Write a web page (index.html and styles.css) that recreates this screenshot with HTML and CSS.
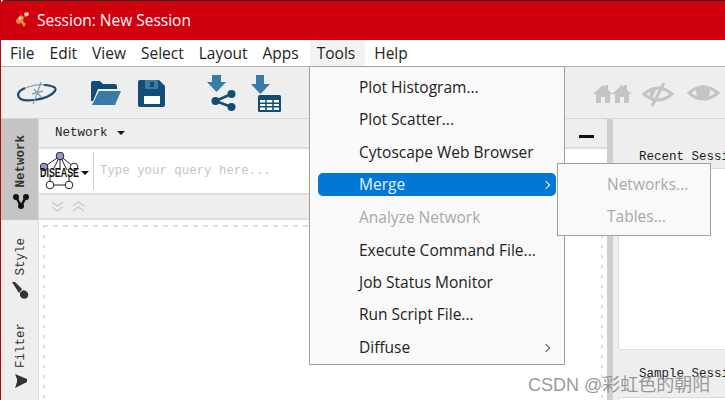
FILE: index.html
```html
<!DOCTYPE html>
<html lang="en">
<head>
  <meta charset="UTF-8" />
  <title>Session: New Session</title>
  <link rel="stylesheet" href="styles.css">
</head>
<body>
  <div class="window">
    <div class="titlebar">
      <svg class="app-icon" width="16" height="16" viewBox="0 0 16 16">
        <path d="M1 8 L6 3 L9 5 L8 9 L11 12 L9 15 L6 11 L3 12 L1 10 Z" fill="#e8873a"/>
        <path d="M9 1 L13 0 L14 3 L10 5 Z" fill="#f0d8b8"/>
        <circle cx="5" cy="6" r="1.500" fill="#f4e4cc"/>
      </svg>
      <span>Session: New Session</span>
    </div>

    <div class="menubar">
      <span class="menu-item">File</span>
      <span class="menu-item">Edit</span>
      <span class="menu-item">View</span>
      <span class="menu-item">Select</span>
      <span class="menu-item">Layout</span>
      <span class="menu-item">Apps</span>
      <span class="menu-item active">Tools</span>
      <span class="menu-item">Help</span>
    </div>

    <div class="toolbar">
      <svg class="tool logo" width="42" height="26" viewBox="0 0 42 26">
        <path d="M3 16 Q1 11 12 7 Q24 3 36 6" fill="none" stroke="#8aa0b0" stroke-width="1.200"/>
        <path d="M28 5 Q42 6 39 11 Q34 18 18 20 Q3 22 2 15 Q2 11 9 8" fill="none" stroke="#1f4e70" stroke-width="2.200"/>
        <path d="M17 24 L21 14 L25 2 M18 9 L25 17 M16 14 L27 11" fill="none" stroke="#8aa0b0" stroke-width="1.300"/>
      </svg>
      <svg class="tool open" width="32" height="26" viewBox="0 0 32 26">
        <path d="M1 3 Q1 1 3 1 H10 L13 4 H25 Q27 4 27 6 V9 H8 L3 21 H1 Z" fill="#134d75"/>
        <path d="M9 11 H31 L25 25 H2 Z" fill="#3a7ba6"/>
      </svg>
      <svg class="tool save" width="29" height="29" viewBox="0 0 29 29">
        <path d="M1 3 Q1 1 3 1 H22 L28 7 V26 Q28 28 26 28 H3 Q1 28 1 26 Z" fill="#134d75"/>
        <rect x="8" y="1" width="13" height="9" fill="#3a7ba6"/>
        <rect x="13" y="3" width="4" height="5" fill="#134d75"/>
        <rect x="7" y="17" width="16" height="8" fill="#fff"/>
      </svg>
      <svg class="tool import-net" width="30" height="39" viewBox="0 0 30 39">
        <path d="M5 1 H14 V8 H19 L9.500 18 L0 8 H5 Z" fill="#3a7ba6"/>
        <path d="M24.500 20 L8.500 27 L24.500 33" fill="none" stroke="#134d75" stroke-width="2.500"/>
        <circle cx="24.500" cy="20" r="4" fill="#134d75"/>
        <circle cx="8.500" cy="27" r="4" fill="#134d75"/>
        <circle cx="24.500" cy="33" r="4" fill="#134d75"/>
      </svg>
      <svg class="tool import-table" width="30" height="38" viewBox="0 0 30 38">
        <path d="M5 0 H13 V9 H19 L9.500 19 L0 9 H5 Z" fill="#3a7ba6"/>
        <rect x="7" y="20" width="23" height="17" rx="1.500" fill="#134d75"/>
        <path d="M9 25 H28 V35 H9 Z" fill="#fff"/>
        <path d="M9 28.300 H28 M9 31.700 H28 M15 25 V35 M22 25 V35" stroke="#134d75" stroke-width="1.500"/>
      </svg>
    </div>

    <div class="main">
      <div class="side-tabs">
        <div class="side-tab selected">
          <span class="tab-label bold">Network</span>
          <svg width="16" height="16" viewBox="0 0 16 16">
            <path d="M3 3 L8 12 L13 3" fill="none" stroke="#111" stroke-width="2.500"/>
            <circle cx="3" cy="3" r="3" fill="#111"/>
            <circle cx="13" cy="3" r="3" fill="#111"/>
            <circle cx="8" cy="12" r="3" fill="#111"/>
          </svg>
        </div>
        <div class="side-tab style-tab">
          <span class="tab-label">Style</span>
          <svg width="18" height="17" viewBox="0 0 18 17">
            <path d="M0 0 L3 0 L10 7 L7 11 Z" fill="#333"/>
            <path d="M8 11 Q10 7 14 9 Q18 12 15 16 Q10 18 8 14 Z" fill="#333"/>
          </svg>
        </div>
        <div class="side-tab filter-tab">
          <span class="tab-label">Filter</span>
          <svg width="16" height="16" viewBox="0 0 16 16">
            <path d="M2 0 L14 5 L14 8 L2 14 L4 8 L4 5 Z" fill="#333"/>
          </svg>
        </div>
      </div>

      <div class="network-panel">
        <div class="panel-head">
          <span class="panel-title">Network</span>
          <span class="caret"></span>
          <span class="minimize"></span>
        </div>
        <div class="search-row">
          <div class="query-icon">
            <svg width="40" height="38" viewBox="0 0 40 38">
              <path d="M4 15 L20 4 L34 15 M20 4 V18 M13 18 L20 4 L27 18 M10 33 H29 M10 24 V33 M29 24 V33" fill="none" stroke="#222" stroke-width="1"/>
              <circle cx="20" cy="4" r="3.800" fill="#8f9bd0" stroke="#222"/>
              <circle cx="4" cy="15" r="3.800" fill="#8f9bd0" stroke="#222"/>
              <circle cx="34" cy="15" r="3.800" fill="#fff" stroke="#222"/>
              <circle cx="10" cy="33" r="3.800" fill="#fff" stroke="#222"/>
              <circle cx="29" cy="33" r="3.800" fill="#fff" stroke="#222"/>
            </svg>
            <span class="disease">DISEASE</span>
            <span class="caret"></span>
          </div>
          <span class="query-text">Type your query here...</span>
        </div>
        <div class="arrows-row">
          <svg width="34" height="14" viewBox="0 0 34 14">
            <path d="M1 2 L6.500 6 L12 2 M1 7 L6.500 11 L12 7 M22 6 L27.500 2 L33 6 M22 11 L27.500 7 L33 11" fill="none" stroke="#cccccc" stroke-width="1.500"/>
          </svg>
        </div>
        <div class="canvas-area">
          <div class="dashed"></div>
        </div>
      </div>

      <div class="splitter"></div>

      <div class="right-panel">
        <div class="session-head">Recent Sessions</div>
        <div class="session-box recent"></div>
        <div class="session-head sample">Sample Sessions</div>
        <div class="session-box"></div>
      </div>
    </div>

    <svg class="view-icons" width="130" height="27" viewBox="0 0 130 27">
      <g fill="#c4c4c4">
        <path d="M1 14 L11 5 L13 7 V5 H16 V10 L21 14 H18 V23 H13 V17 H9 V23 H4 V14 Z"/>
        <path d="M20 14 L30 5 L32 7 V5 H35 V10 L40 14 H37 V23 H32 V17 H28 V23 H23 V14 Z"/>
      </g>
      <g fill="none" stroke="#c4c4c4" stroke-width="3">
        <path d="M52 14 Q66 2 80 14 Q66 26 52 14 Z"/>
        <path d="M72 3 L60 26"/>
        <path d="M97 13 Q111 1 126 13 Q111 25 97 13 Z"/>
      </g>
      <circle cx="111" cy="12" r="7" fill="#c4c4c4"/>
      <path d="M65 7 A7 7 0 0 0 60 19 Z" fill="#c4c4c4"/>
    </svg>

    <div class="dropdown">
      <div class="drop-item">Plot Histogram...</div>
      <div class="drop-item">Plot Scatter...</div>
      <div class="drop-item">Cytoscape Web Browser</div>
      <div class="drop-item hilite">Merge<span class="chev"></span></div>
      <div class="drop-item off">Analyze Network</div>
      <div class="drop-item">Execute Command File...</div>
      <div class="drop-item">Job Status Monitor</div>
      <div class="drop-item">Run Script File...</div>
      <div class="drop-item">Diffuse<span class="chev"></span></div>
    </div>

    <div class="submenu">
      <div class="drop-item off">Networks...</div>
      <div class="drop-item off">Tables...</div>
    </div>

    <div class="watermark">CSDN @彩虹色的朝阳</div>
  </div>
</body>
</html>
```

FILE: styles.css
```css
* {
  box-sizing: border-box;
}

html, body {
  margin: 0;
  height: 100%;
  overflow: hidden;
  background: #fff;
}

.window {
  position: relative;
  width: 725px;
  height: 400px;
  display: flex;
  flex-direction: column;
  overflow: hidden;
  border-left: 1px solid #c00010;
  font-family: "Open Sans", "Noto Sans", sans-serif;
  color: #222;
}

.titlebar {
  height: 40px;
  flex: none;
  background: #d0000f;
  color: #fff;
  font-size: 15.500px;
  display: flex;
  align-items: center;
  gap: 6px;
  padding-left: 14px;
  padding-bottom: 2px;
  border-top: 1px solid #2a2a2a;
  border-radius: 4px 0 0 0;
}

.menubar {
  height: 27px;
  flex: none;
  display: flex;
  align-items: center;
  padding-left: 4px;
  background: #fff;
  border-bottom: 1px solid #b4b4b4;
  font-size: 15.500px;
}

.menu-item {
  padding: 2px 5px;
  margin-right: 5px;
  height: 26px;
  line-height: 23px;
}

.menu-item.active {
  background: #f2f2f2;
  border-radius: 3px 3px 0 0;
  margin-left: 1px;
  margin-right: 4px;
  padding: 2px 10px 2px 7px;
}

.toolbar {
  height: 52px;
  flex: none;
  background: #eeeeee;
  border-bottom: 1px solid #d6d6d6;
  display: flex;
  align-items: center;
  padding-left: 15px;
}

.tool {
  flex: none;
}

.open { margin-left: 32px; }
.save { margin-left: 15px; margin-top: 1px; }
.import-net { margin-left: 41px; margin-top: 2px; }
.import-table { margin-left: 14px; margin-top: 3px; }

.view-icons {
  position: absolute;
  left: 591px;
  top: 80px;
}

.main {
  flex: 1;
  display: flex;
  min-height: 0;
}

.side-tabs {
  width: 37px;
  flex: none;
  background: #eeeeee;
  display: flex;
  flex-direction: column;
}

.side-tab {
  display: flex;
  flex-direction: column;
  align-items: center;
  justify-content: flex-end;
  gap: 6px;
  padding-bottom: 4px;
  padding-left: 2px;
}

.side-tab.selected {
  height: 101px;
  background: #c4c4c4;
  padding-bottom: 10px;
  margin-bottom: 2px;
}

.side-tab.style-tab {
  height: 81px;
}

.side-tab.filter-tab {
  height: 91px;
}

.tab-label {
  writing-mode: vertical-rl;
  transform: rotate(180deg);
  font-family: "Liberation Mono", monospace;
  font-size: 12.500px;
  color: #333;
}

.tab-label.bold {
  font-weight: bold;
}

.network-panel {
  width: 569px;
  flex: none;
  display: flex;
  flex-direction: column;
  border-left: 1px solid #dddddd;
}

.panel-head {
  height: 30px;
  flex: none;
  background: #eeeeee;
  border-bottom: 2px solid #dedede;
  display: flex;
  align-items: center;
  padding-left: 16px;
  padding-bottom: 1px;
  font-family: "Liberation Mono", monospace;
  font-size: 12.500px;
  color: #222;
}

.panel-title {
  margin-right: 9px;
}

.caret {
  display: inline-block;
  width: 0;
  height: 0;
  border-left: 4px solid transparent;
  border-right: 4px solid transparent;
  border-top: 4px solid #111;
}

.minimize {
  width: 15px;
  height: 3px;
  background: #111;
  margin-left: auto;
  margin-right: 13px;
  margin-top: 8px;
}

.search-row {
  height: 46px;
  flex: none;
  background: #fff;
  border-bottom: 2px solid #dedede;
  display: flex;
  align-items: center;
}

.query-icon {
  position: relative;
  width: 55px;
  height: 38px;
  flex: none;
  display: flex;
  align-items: center;
  justify-content: flex-end;
  padding-right: 4px;
  border-right: 1px solid #cfcfcf;
}

.query-icon svg {
  position: absolute;
  left: 1px;
  top: 0;
}

.query-icon .caret {
  margin-top: 4px;
}

.disease {
  position: absolute;
  left: 1px;
  top: 15px;
  font-family: "Liberation Sans", sans-serif;
  font-size: 12px;
  font-weight: bold;
  line-height: 12px;
  color: #111;
  transform: scaleX(0.74);
  transform-origin: left;
}

.query-text {
  margin-left: 6px;
  font-family: "Liberation Mono", monospace;
  font-size: 12.400px;
  color: #c4c4c4;
}

.arrows-row {
  height: 25px;
  flex: none;
  background: #eeeeee;
  border-bottom: 2px solid #dedede;
  padding-left: 12px;
  display: flex;
  align-items: center;
}

.canvas-area {
  flex: 1;
  background: #fff;
  padding: 5px 4px 0 4px;
}

.dashed {
  height: 100%;
  background-image:
    repeating-linear-gradient(to right, #dcdcdc 0 5px, transparent 5px 10px),
    repeating-linear-gradient(to bottom, #dcdcdc 0 3px, transparent 3px 10px),
    repeating-linear-gradient(to bottom, #dcdcdc 0 3px, transparent 3px 10px);
  background-size: 100% 2px, 2px 100%, 2px 100%;
  background-position: left top, left top, right top;
  background-repeat: no-repeat;
}

.splitter {
  width: 6px;
  flex: none;
  background: #cfcfcf;
}

.right-panel {
  flex: 1;
  background: #eeeeee;
  padding-left: 5px;
}

.session-head {
  height: 49px;
  padding: 31px 0 0 21px;
  font-family: "Liberation Mono", monospace;
  font-size: 12.500px;
  line-height: 14px;
  white-space: nowrap;
  overflow: hidden;
  color: #222;
}

.session-head.sample {
  height: 47px;
  padding-top: 17px;
}

.session-box {
  height: 60px;
  background: #fff;
  border: 1px solid #dcdcdc;
}

.session-box.recent {
  height: 182px;
}

.dropdown {
  position: absolute;
  left: 308px;
  top: 66px;
  width: 256px;
  height: 299px;
  padding-top: 5px;
  background: #f9f9f9;
  border: 1px solid #a0a0a0;
  font-size: 15.500px;
}

.drop-item {
  position: relative;
  height: 32.400px;
  line-height: 31px;
  padding-left: 49px;
  color: #222;
  white-space: nowrap;
}

.drop-item.hilite {
  background: #0078d4;
  color: #e8f2fb;
  margin: 4px 8px 6px;
  padding-left: 41px;
  height: 23px;
  line-height: 23px;
  border-radius: 5px;
}

.drop-item.off {
  color: #a8a8a8;
}

.chev {
  position: absolute;
  right: 5px;
  top: 50%;
  width: 6px;
  height: 6px;
  margin-top: -3px;
  border-top: 1.500px solid currentColor;
  border-right: 1.500px solid currentColor;
  transform: rotate(45deg);
}

.drop-item .chev {
  right: 15px;
  color: #555;
}

.drop-item.hilite .chev {
  right: 7px;
  color: #e8f2fb;
}

.submenu {
  position: absolute;
  left: 556px;
  top: 163px;
  width: 154px;
  height: 73px;
  padding-top: 5px;
  background: #f9f9f9;
  border: 1px solid #a0a0a0;
  font-size: 15.500px;
}

.watermark {
  position: absolute;
  left: 527px;
  top: 370px;
  font-family: "Liberation Sans", "Noto Sans CJK SC", sans-serif;
  font-size: 18px;
  color: #8a8a8a;
  opacity: 0.85;
  white-space: nowrap;
}
```
